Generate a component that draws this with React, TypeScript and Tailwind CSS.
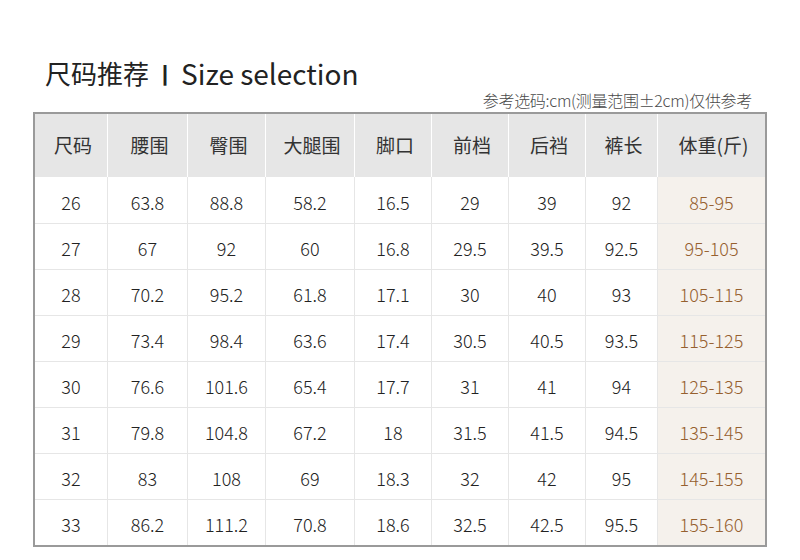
import React from 'react';

const headers = ['尺码', '腰围', '臀围', '大腿围', '脚口', '前档', '后裆', '裤长', '体重(斤)'];

const rows: string[][] = [
  ['26', '63.8', '88.8', '58.2', '16.5', '29', '39', '92', '85-95'],
  ['27', '67', '92', '60', '16.8', '29.5', '39.5', '92.5', '95-105'],
  ['28', '70.2', '95.2', '61.8', '17.1', '30', '40', '93', '105-115'],
  ['29', '73.4', '98.4', '63.6', '17.4', '30.5', '40.5', '93.5', '115-125'],
  ['30', '76.6', '101.6', '65.4', '17.7', '31', '41', '94', '125-135'],
  ['31', '79.8', '104.8', '67.2', '18', '31.5', '41.5', '94.5', '135-145'],
  ['32', '83', '108', '69', '18.3', '32', '42', '95', '145-155'],
  ['33', '86.2', '111.2', '70.8', '18.6', '32.5', '42.5', '95.5', '155-160'],
];

const cols = 'grid grid-cols-[72px_80px_78px_89px_77px_77px_77px_72px_108px]';

export default function App() {
  return (
    <div className="w-[800px] h-[560px] bg-white font-['Noto_Sans_CJK_SC','Noto_Sans',sans-serif] text-[#222] font-light">
      <div className="pt-[55px] pl-[45px] text-[26px] leading-[36px] text-[#222] font-normal flex items-center">
        <span>尺码推荐</span>
        <span className="mx-[5px] font-bold text-[22px]">丨</span>
        <span className="text-[28px]">Size selection</span>
      </div>
      <div className="w-[752px] text-right text-[16px] leading-[18px] text-[#4a4a4a] tracking-[-0.3px]">
        参考选码:cm(测量范围±2cm)仅供参考
      </div>
      <div className="ml-[33px] mt-[3px] w-[734px] border-2 border-[#9a9a9a]">
        <div className={`${cols} h-[63px] bg-[#e6e6e6]`}>
          {headers.map((h, i) => (
            <div
              key={h}
              className={`flex items-center justify-center pl-[4px] text-[19px] text-[#333] font-normal ${i > 0 ? 'border-l border-white' : ''}`}
            >
              {h}
            </div>
          ))}
        </div>
        {rows.map((r, ri) => (
          <div key={r[0]} className={`${cols} h-[46px] ${ri > 0 ? 'border-t border-[#e6e6e6]' : ''}`}>
            {r.map((c, ci) => (
              <div
                key={ci}
                className={`flex items-center justify-center pt-[4px] text-[18px] ${ci > 0 ? 'border-l border-[#e6e6e6]' : ''} ${ci === 8 ? 'bg-[#f5f1ec] text-[#96602f]' : ''}`}
              >
                {c}
              </div>
            ))}
          </div>
        ))}
      </div>
    </div>
  );
}
